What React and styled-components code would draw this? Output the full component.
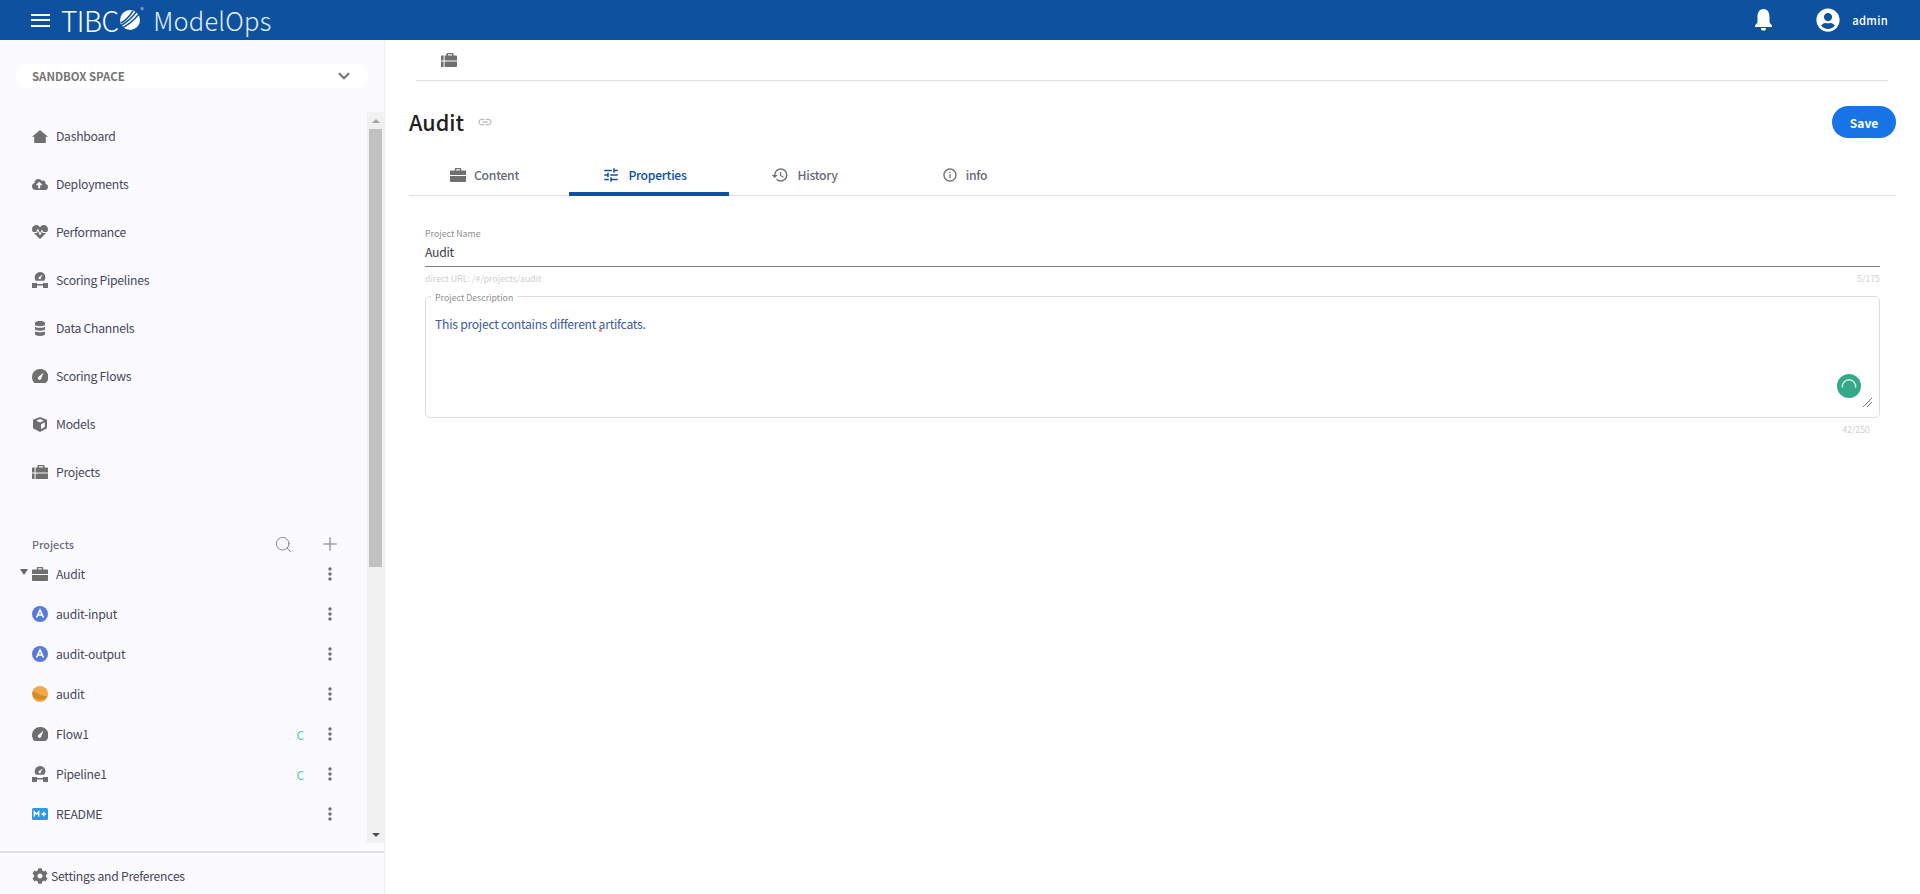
import React from "react";
import styled, { createGlobalStyle, css } from "styled-components";
import { FaCloudUploadAlt, FaHeartbeat, FaCog, FaUserCircle } from "react-icons/fa";
import { MdMoreVert, MdLink, MdOutlineInfo, MdHistory, MdTune } from "react-icons/md";
import { FiSearch, FiPlus, FiChevronDown } from "react-icons/fi";

const fontStack = `"Noto Sans CJK JP", "Noto Sans", sans-serif`;
const blue = "#0e519e";

const bodyText = css`
  font-size: 12.2px;
  letter-spacing: -0.27px;
`;

const GlobalStyle = createGlobalStyle`
  html, body {
    margin: 0;
    height: 100%;
    overflow: hidden;
    background: #fff;
    font-family: ${fontStack};
  }
  * {
    box-sizing: border-box;
  }
`;

const Page = styled.div`
  display: flex;
  flex-direction: column;
  height: 894px;
`;

const TopBar = styled.header`
  display: flex;
  align-items: center;
  height: 40px;
  padding: 0 32px 0 31px;
  background: ${blue};
  color: #fff;
`;

const Burger = styled.div`
  display: flex;
  flex-direction: column;
  gap: 3.5px;
  width: 19px;
  margin-right: 11px;

  span {
    height: 2px;
    background: #fff;
  }
`;

const Brand = styled.div`
  display: flex;
  align-items: center;
  font-size: 28px;
  line-height: 40px;
  font-weight: 300;
  letter-spacing: -0.5px;
`;

const Registered = styled.span`
  align-self: flex-start;
  margin: 5px 0 0 0;
  font-size: 7px;
  line-height: 10px;
`;

const Product = styled.div`
  margin-left: 10px;
  font-size: 25.5px;
  line-height: 40px;
  font-weight: 200;
  letter-spacing: 0.2px;
  color: #e4f0fb;
`;

const TopRight = styled.div`
  display: flex;
  align-items: center;
  margin-left: auto;
`;

const Avatar = styled(FaUserCircle)`
  margin-left: 44px;
`;

const UserName = styled.span`
  margin-left: 12px;
  font-size: 11.2px;
  font-weight: 500;
  letter-spacing: 0.3px;
`;

const Layout = styled.div`
  display: flex;
  flex: 1;
  min-height: 0;
`;

const Sidebar = styled.aside`
  display: flex;
  flex-direction: column;
  width: 385px;
  flex: none;
  background: #fbfbff;
  border-right: 1px solid #eeeeee;
`;

const SpaceSelect = styled.div`
  display: flex;
  align-items: center;
  justify-content: space-between;
  height: 24px;
  margin: 24px 16px;
  padding: 0 15px 1px 16px;
  border-radius: 12px;
  background: #fff;
  color: #757575;
  font-size: 11.4px;
  font-weight: 700;
`;

const ScrollArea = styled.div`
  display: flex;
  flex: 1;
  min-height: 0;
`;

const NavColumn = styled.div`
  flex: 1;
`;

const NavItem = styled.div`
  display: flex;
  align-items: center;
  height: 48px;
  padding-left: 32px;
  color: #46465a;
  ${bodyText}
`;

const IconSlot = styled.span`
  display: flex;
  align-items: center;
  justify-content: center;
  width: 16px;
  height: 16px;
  margin-right: 8px;
  flex: none;
  color: #6f6f6f;
`;

const ProjectsHead = styled.div`
  display: flex;
  align-items: center;
  height: 20px;
  margin-top: 38px;
  padding: 0 26px 0 32px;
  color: #6b6b7d;
  font-size: 10.8px;
  font-weight: 500;
`;

const HeadAction = styled.span`
  display: flex;
  color: #777;
  margin-left: ${(props) => props.$gap};
`;

const TreeRow = styled.div`
  position: relative;
  display: flex;
  align-items: center;
  height: 40px;
  padding-left: 32px;
  color: #46465a;
  ${bodyText}
`;

const Caret = styled.span`
  position: absolute;
  left: 20px;
  top: 15px;
  border-left: 4px solid transparent;
  border-right: 4px solid transparent;
  border-top: 6px solid #666;
`;

const Commit = styled.span`
  margin-left: auto;
  margin-right: 16px;
  color: #47d68a;
  font-size: 12px;
`;

const Kebab = styled.span`
  display: flex;
  margin-left: ${(props) => (props.$pushed ? "0" : "auto")};
  margin-right: 27px;
  color: #707070;
`;

const Scrollbar = styled.div`
  display: flex;
  flex-direction: column;
  align-items: center;
  justify-content: space-between;
  width: 17px;
  background: #f1f1f1;
`;

const ScrollTop = styled.div`
  display: flex;
  flex-direction: column;
  align-items: center;
`;

const ScrollArrow = styled.span`
  height: 17px;
  flex: none;
  display: flex;
  align-items: center;

  &::before {
    content: "";
    border-left: 4px solid transparent;
    border-right: 4px solid transparent;
    ${(props) =>
      props.$down
        ? "border-top: 4px solid #505050;"
        : "border-bottom: 4px solid #a3a3a3;"}
  }
`;

const ScrollThumb = styled.div`
  width: 13px;
  height: 438px;
  background: #c1c1c1;
`;

const SidebarFoot = styled.div`
  display: flex;
  align-items: center;
  height: 43px;
  margin-top: 8px;
  padding: 4px 0 0 32px;
  border-top: 2px solid #e2e2e2;
  color: #46465a;
  ${bodyText}

  ${IconSlot} {
    margin-right: 3px;
  }
`;

const Main = styled.main`
  flex: 1;
  min-width: 0;
  padding: 0 24px;
`;

const Crumbs = styled.div`
  display: flex;
  align-items: center;
  height: 41px;
  margin: 0 8px 0 7px;
  padding-left: 25px;
  border-bottom: 1px solid #e0e0e0;
`;

const TitleRow = styled.div`
  display: flex;
  align-items: center;
  height: 32px;
  margin-top: 25px;
`;

const Title = styled.h1`
  margin: 0 13px 0 0;
  font-size: 21.6px;
  line-height: 32px;
  font-weight: 500;
  color: #1f1f1f;
`;

const SaveButton = styled.button`
  width: 64px;
  height: 32px;
  margin-left: auto;
  border: 0;
  border-radius: 16px;
  background: #1774e5;
  color: #fff;
  font-family: inherit;
  font-size: 12px;
  font-weight: 700;
`;

const Tabs = styled.nav`
  display: flex;
  height: 36px;
  margin-top: 22px;
  border-bottom: 1px solid #e0e0e0;
`;

const Tab = styled.div`
  display: flex;
  align-items: center;
  justify-content: center;
  gap: 8px;
  width: 160px;
  height: 36px;
  padding: 0 9px 2px 0;
  border-bottom: 4px solid ${(props) => (props.$active ? blue : "transparent")};
  color: ${(props) => (props.$active ? blue : "#666a73")};
  ${bodyText}
  font-weight: 500;

  svg {
    color: ${(props) => (props.$active ? blue : "#6f6f6f")};
  }
`;

const Form = styled.form`
  padding: 31px 16px 0 16px;
`;

const FieldLabel = styled.div`
  font-size: 8.8px;
  line-height: 14px;
  color: #8f8f8f;
`;

const NameInput = styled.div`
  height: 26px;
  padding-top: 1px;
  border-bottom: 1px solid #808080;
  color: #3a3a44;
  ${bodyText}
  line-height: 20px;
`;

const Hint = styled.div`
  display: flex;
  justify-content: space-between;
  padding-right: ${(props) => props.$inset || 0}px;
  margin-top: 5px;
  font-size: 8.8px;
  line-height: 14px;
  color: #cfcfcf;
`;

const DescriptionBox = styled.fieldset`
  position: relative;
  height: 131px;
  margin: 1px 0 0;
  padding: 0 9px;
  min-width: 0;
  border: 1px solid #dedede;
  border-radius: 5px;

  legend {
    margin-left: -4px;
    padding: 4px 4px 0;
    font-size: 8.8px;
    line-height: 14px;
    color: #8f8f8f;
  }
`;

const DescriptionText = styled.div`
  margin-top: 8px;
  color: #3d5a98;
  ${bodyText}
  line-height: 22px;
`;

const SpellMark = styled.span`
  position: relative;

  &::after {
    content: "";
    position: absolute;
    left: 0;
    bottom: 1px;
    width: 3px;
    height: 3px;
    background: #f58fa8;
  }
`;

const SyncBadge = styled.svg`
  position: absolute;
  right: 18px;
  bottom: 19px;
`;

const Grip = styled.svg`
  position: absolute;
  right: 7px;
  bottom: 10px;
`;

const iconGrey = "#6f6f6f";

const HomeIcon = () => (
  <svg width="16" height="13" viewBox="0 0 16 13">
    <path fill={iconGrey} d="M8 0l8 6.800h-2.200V13H2.200V6.800H0z" />
  </svg>
);

const DatabaseIcon = () => (
  <svg width="10" height="15" viewBox="0 0 10 15">
    <path
      fill={iconGrey}
      d="M0 2c0-2.600 10-2.600 10 0v2c0 1.500-10 1.500-10 0zM0 5.800c2 1.300 8 1.300 10 0v2.700c0 1.500-10 1.500-10 0zM0 10.300c2 1.300 8 1.300 10 0V13c0 2.600-10 2.600-10 0z"
    />
  </svg>
);

const CubeIcon = () => (
  <svg width="14" height="15" viewBox="0 0 14 15">
    <path
      fill={iconGrey}
      fillRule="evenodd"
      d="M7 0l7 2.800v8.400L7 15l-7-3.800V2.800zM7 2L3.200 3.700 7 5.600l3.800-1.900zM8 7.200v4.900l3.800-2V5.300z"
    />
  </svg>
);

const GaugeIcon = () => (
  <svg width="16" height="14" viewBox="0 0 16 14">
    <path
      fill={iconGrey}
      d="M8 0a8 8 0 0 0-8 8c0 2.300.9 4.300 2.300 6h11.400A8 8 0 0 0 8 0zm3.600 3.600L9.200 9.400a1.700 1.700 0 1 1-2.500-1.700z"
    />
  </svg>
);

const PipelineIcon = () => (
  <svg width="16" height="16" viewBox="0 0 16 16">
    <path
      fill={iconGrey}
      d="M8 0a5.300 5.300 0 0 0-5.300 5.300c0 1.300.5 2.500 1.300 3.500h8a5.300 5.300 0 0 0-4-8.800zm2.500 2.500L9 6a1.200 1.200 0 1 1-1.900-1.100zM0 11h5v1h6v-1h5v5h-5v-2.500H5V16H0z"
    />
  </svg>
);

const ProjectIcon = () => (
  <svg width="16" height="14" viewBox="0 0 16 14">
    <path
      fill={iconGrey}
      d="M5.500 2.500V1c0-.6.4-1 1-1h5c.6 0 1 .4 1 1v1.500H15c.6 0 1 .4 1 1v4H3.600v-5zM7 2.500h4V1.300H7zM3.600 8.500H16V13c0 .6-.4 1-1 1H3.600zM1 2.500h1.600v5H0v-4c0-.6.4-1 1-1zM0 8.500h2.600V14H1c-.6 0-1-.4-1-1z"
    />
  </svg>
);

const BriefcaseIcon = () => (
  <svg width="16" height="14" viewBox="0 0 16 14">
    <path
      fill={iconGrey}
      d="M4.800 2.500V1c0-.6.4-1 1-1h4.400c.6 0 1 .4 1 1v1.500H15c.6 0 1 .4 1 1V7H0V3.500c0-.6.4-1 1-1zM6.200 2.500h3.600V1.200H6.200zM0 8h16v5c0 .6-.4 1-1 1H1c-.6 0-1-.4-1-1z"
    />
  </svg>
);

const ChannelBadge = () => (
  <svg width="16" height="16" viewBox="0 0 16 16">
    <circle cx="8" cy="8" r="8" fill="#5b7ad6" />
    <path
      fill="none"
      stroke="#fff"
      strokeWidth="1.600"
      d="M4.600 11.500L8 4l3.400 7.500M6 9h4"
    />
  </svg>
);

const ModelBadge = () => (
  <svg width="16" height="16" viewBox="0 0 16 16">
    <circle cx="8" cy="8" r="8" fill="#f0a84a" />
    <path
      fill="#cf8c28"
      d="M0.300 6C3 5 5 7 8 8.500c3 1.500 5.500 2 7.500 1A8 8 0 0 1 0.300 6z"
    />
  </svg>
);

const MarkdownBadge = () => (
  <svg width="16" height="12" viewBox="0 0 16 12">
    <rect width="16" height="12" rx="1.500" fill="#2f98e6" />
    <path
      fill="none"
      stroke="#fff"
      strokeWidth="1.400"
      d="M2.300 8.500V3.800l2.200 2.400 2.200-2.400v4.700M9.500 6h4.500M11.750 3.800v4.400"
    />
  </svg>
);

const BellIcon = () => (
  <svg width="17" height="22" viewBox="0 0 17 22">
    <path
      fill="#fff"
      d="M8.500 0C4 0 2.500 4 2.500 8v5.500L0 16.500V18h17v-1.500l-2.500-3V8C14.500 4 13 0 8.500 0zM5.800 19h5.400l-1 2.500H6.800z"
    />
  </svg>
);

const LogoGlobe = () => (
  <svg width="22" height="22" viewBox="0 0 22 22">
    <circle cx="11" cy="11" r="10" fill="#fff" />
    <path
      fill="none"
      stroke={blue}
      strokeWidth="1.400"
      d="M1 17C7 14 13 9 18 2M3 19C9 16 15 11 20 5M2 14C6 12 10 8 14 2"
    />
  </svg>
);

const navItems = [
  { label: "Dashboard", icon: <HomeIcon /> },
  { label: "Deployments", icon: <FaCloudUploadAlt size={17} /> },
  { label: "Performance", icon: <FaHeartbeat size={16} /> },
  { label: "Scoring Pipelines", icon: <PipelineIcon /> },
  { label: "Data Channels", icon: <DatabaseIcon /> },
  { label: "Scoring Flows", icon: <GaugeIcon /> },
  { label: "Models", icon: <CubeIcon /> },
  { label: "Projects", icon: <ProjectIcon /> },
];

const treeItems = [
  { label: "audit-input", icon: <ChannelBadge /> },
  { label: "audit-output", icon: <ChannelBadge /> },
  { label: "audit", icon: <ModelBadge /> },
  { label: "Flow1", icon: <GaugeIcon />, changed: true },
  { label: "Pipeline1", icon: <PipelineIcon />, changed: true },
  { label: "README", icon: <MarkdownBadge /> },
];

export default function App() {
  return (
    <Page>
      <GlobalStyle />
      <TopBar>
        <Burger>
          <span />
          <span />
          <span />
        </Burger>
        <Brand>
          TIBC
          <LogoGlobe />
          <Registered>®</Registered>
        </Brand>
        <Product>ModelOps</Product>
        <TopRight>
          <BellIcon />
          <Avatar size={24} />
          <UserName>admin</UserName>
        </TopRight>
      </TopBar>

      <Layout>
        <Sidebar>
          <SpaceSelect>
            SANDBOX SPACE
            <FiChevronDown size={18} strokeWidth={3} color="#777" />
          </SpaceSelect>

          <ScrollArea>
            <NavColumn>
              {navItems.map((item) => (
                <NavItem key={item.label}>
                  <IconSlot>{item.icon}</IconSlot>
                  {item.label}
                </NavItem>
              ))}

              <ProjectsHead>
                Projects
                <HeadAction $gap="auto">
                  <FiSearch size={19} strokeWidth={1.1} />
                </HeadAction>
                <HeadAction $gap="26px">
                  <FiPlus size={22} strokeWidth={1.1} />
                </HeadAction>
              </ProjectsHead>

              <TreeRow>
                <Caret />
                <IconSlot>
                  <BriefcaseIcon />
                </IconSlot>
                Audit
                <Kebab>
                  <MdMoreVert size={20} />
                </Kebab>
              </TreeRow>
              {treeItems.map((item) => (
                <TreeRow key={item.label}>
                  <IconSlot>{item.icon}</IconSlot>
                  {item.label}
                  {item.changed && <Commit>C</Commit>}
                  <Kebab $pushed={item.changed}>
                    <MdMoreVert size={20} />
                  </Kebab>
                </TreeRow>
              ))}
            </NavColumn>

            <Scrollbar>
              <ScrollTop>
                <ScrollArrow />
                <ScrollThumb />
              </ScrollTop>
              <ScrollArrow $down />
            </Scrollbar>
          </ScrollArea>

          <SidebarFoot>
            <IconSlot>
              <FaCog size={16} />
            </IconSlot>
            Settings and Preferences
          </SidebarFoot>
        </Sidebar>

        <Main>
          <Crumbs>
            <ProjectIcon />
          </Crumbs>

          <TitleRow>
            <Title>Audit</Title>
            <MdLink size={16} color="#bdbdbd" />
            <SaveButton type="button">Save</SaveButton>
          </TitleRow>

          <Tabs>
            <Tab>
              <BriefcaseIcon />
              Content
            </Tab>
            <Tab $active>
              <MdTune size={18} />
              Properties
            </Tab>
            <Tab>
              <MdHistory size={18} />
              History
            </Tab>
            <Tab>
              <MdOutlineInfo size={16} />
              info
            </Tab>
          </Tabs>

          <Form>
            <FieldLabel>Project Name</FieldLabel>
            <NameInput>Audit</NameInput>
            <Hint>
              <span>direct URL: /#/projects/audit</span>
              <span>5/175</span>
            </Hint>
            <DescriptionBox>
              <legend>Project Description</legend>
              <DescriptionText>
                This project contains different <SpellMark>artifcats.</SpellMark>
              </DescriptionText>
              <SyncBadge width="24" height="24" viewBox="0 0 24 24">
                <circle cx="12" cy="12" r="12" fill="#36a88a" />
                <path
                  d="M5.500 13.500A6.600 6.600 0 1 1 18.500 13.500"
                  fill="none"
                  stroke="#d9f2ea"
                  strokeWidth="1.400"
                />
              </SyncBadge>
              <Grip width="9" height="9" viewBox="0 0 9 9">
                <path d="M0 9L9 0M4 9L9 4" stroke="#555" strokeWidth="0.800" />
              </Grip>
            </DescriptionBox>
            <Hint $inset={10}>
              <span />
              <span>42/250</span>
            </Hint>
          </Form>
        </Main>
      </Layout>
    </Page>
  );
}
